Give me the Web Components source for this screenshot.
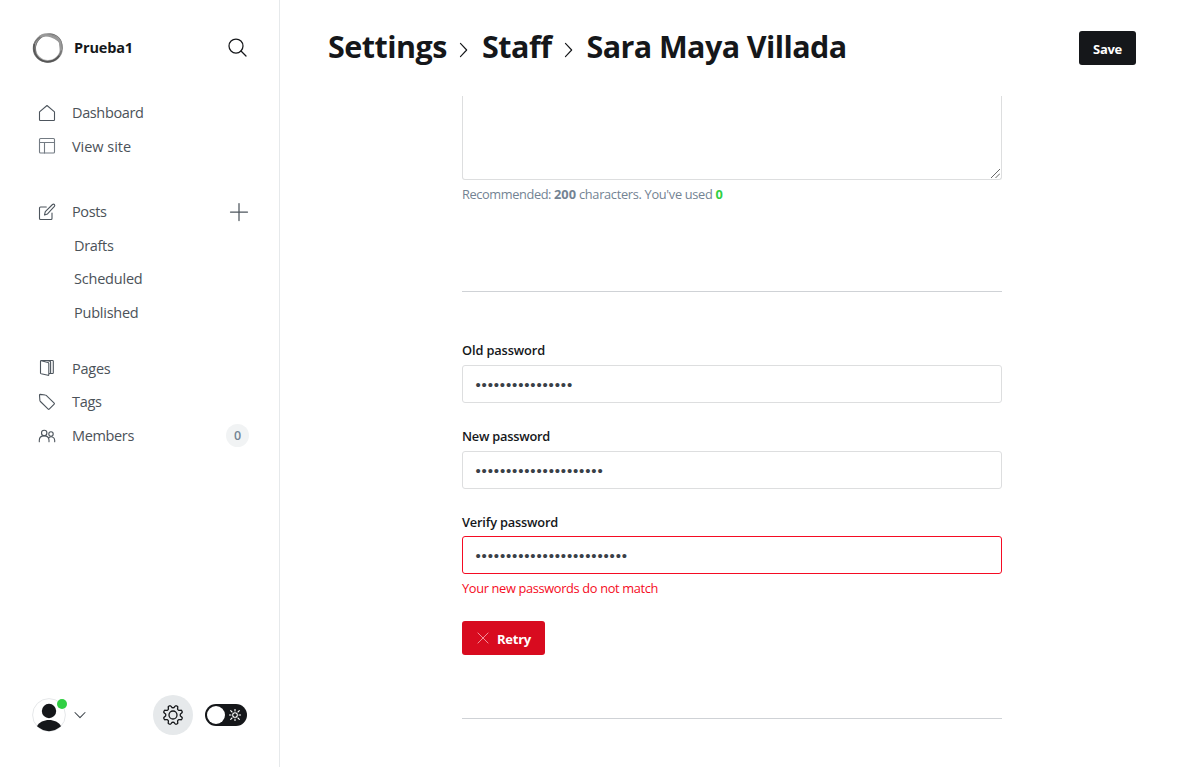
<!DOCTYPE html>
<html lang="en">
<head>
<meta charset="utf-8">
<title>Settings</title>
<style>
html,body{margin:0;height:100%;overflow:hidden;background:#fff}
body{font-family:"Open Sans","Noto Sans",sans-serif;color:#15171a}
</style>
</head>
<body>
<staff-app></staff-app>
<script>
const define=(name,html,setup)=>customElements.define(name,class extends HTMLElement{
  constructor(){
    super();
    const t=document.createElement('template');
    t.innerHTML=html;
    this.attachShadow({mode:'open'}).append(t.content.cloneNode(true));
  }
  connectedCallback(){ if(setup) setup(this,this.shadowRoot); }
});

/* Single-line label whose tracking is adjusted to a requested width. */
define('fit-text',`<style>:host{display:inline-block;white-space:pre;flex:none}span{display:inline-block}</style><span><slot></slot></span>`,(el,root)=>{
  const s=root.querySelector('span'), w=+el.getAttribute('w');
  const n=el.textContent.length;
  s.style.letterSpacing=((w-s.getBoundingClientRect().width)/n)+'px';
});

const icons={
 search:'<circle cx="8" cy="8" r="7"/><path d="m13 13 5 5"/>',
 home:'<path d="M1.500 7.900v7.900q0 .7.7.7h13.600q.7 0 .7-.7V7.900L9 1.500z"/>',
 site:'<rect x="1.5" y="1.5" width="15" height="14.5" rx="1"/><path d="M1.5 5.5h15M6.5 5.5V16"/>',
 edit:'<path d="M8.3 4H2.5q-1 0-1 1v10.500q0 1 1 1H13q1 0 1-1V10M6.500 12l.8-3.300 7.200-7.200q1-.8 1.900 0 .8.9 0 1.900L9.500 10.900z"/>',
 pages:'<path d="M3.200 1.700 10 3.500q.8.200.8 1v11.300q0 .7-.8.500L3.200 14.800q-.7-.2-.7-.8V2.200q0-.7.700-.7H14.500q.8 0 .8.700v11.500q0 .8-.8.800h-1.800M8.800 1.500l3.200.8q.6.200.6 1v11.200h-1.800"/>',
 tag:'<path d="M1.500 2.200q0-.8.800-.8L7.200 2q.6 0 1 .4l8 7.800q.5.500 0 1l-5 5q-.5.500-1 0L2.400 8.500Q2 8.100 1.900 7.500z"/>',
 members:'<circle cx="6.200" cy="6" r="2.700"/><circle cx="13" cy="7" r="2.200"/><path d="M1.300 14.800v-1.600c0-5.800 9.700-5.800 9.700 0v1.600M10.700 10.900c2-2.200 6-1.200 6 2.300v1.600"/>',
 plus:'<path d="M9 .5v17M.5 9h17"/>',
 down:'<path d="m2.500 5.800 6.500 6.700 6.500-6.700"/>',
 right:'<path d="m5 1.500 7 7.500-7 7.500"/>',
 cross:'<path d="m2.500 2.500 13 13m0-13-13 13"/>'
};
define('ui-icon',`<style>:host{display:block;width:18px;height:18px;flex:none}svg{display:block;width:100%;height:100%;overflow:visible;fill:none;stroke:currentColor;stroke-width:var(--stroke,1.1);stroke-linejoin:round;stroke-linecap:round}</style><svg viewBox="0 0 18 18"></svg>`,
 (el,root)=>{root.querySelector('svg').innerHTML=icons[el.getAttribute('name')]});

define('nav-item',`<style>
:host{display:flex;align-items:center;height:33.5px;padding:0 31px 0 38px;font-size:14.500px;font-weight:400;color:#4b5259}
::slotted(ui-icon){color:#4d555d}
::slotted([slot=icon]){margin-right:16px}
.end{margin-left:auto}
:host([sub]){padding-left:74px}
</style><slot name="icon"></slot><slot></slot><div class="end"><slot name="end"></slot></div>`);

define('count-badge',`<style>:host{display:flex;box-sizing:border-box;width:23px;height:23px;padding-top:1px;margin:1px -1px 0 0;border-radius:50%;background:#f1f3f4;align-items:center;justify-content:center;font-size:12.500px;font-weight:600;color:#738393}</style><slot></slot>`);

define('site-logo',`<style>:host{display:block;width:32px;height:32px;flex:none}svg{display:block}</style>
<svg width="32" height="32" viewBox="0 0 32 32" fill="none">
<circle cx="16" cy="16" r="13.500" stroke="#aaa" stroke-width="3"/>
<ellipse cx="15.500" cy="16.400" rx="14" ry="13.400" stroke="#666" stroke-width="1.500" opacity=".8"/>
<ellipse cx="16.500" cy="15.500" rx="12.800" ry="14.300" stroke="#777" stroke-width="1" transform="rotate(35 16 16)"/>
<path d="M2.300 12c-2 10 5 17.500 13 17.700 5 0 9-2 12-6" stroke="#555" stroke-width="1.500"/>
<path d="M8 4.500c7-3 15 0 20 5l1 9" stroke="#999" stroke-width="2.400"/></svg>`);

define('user-avatar',`<style>:host{display:block;position:relative;width:34px;height:34px;flex:none}svg{display:block}i{position:absolute;right:-1px;top:1px;width:10px;height:10px;border-radius:50%;background:#30cf43}</style>
<svg width="34" height="34" viewBox="0 0 34 34"><circle cx="17" cy="17" r="16.400" fill="#fff" stroke="#e5e7e9"/><circle cx="17" cy="13" r="7.200" fill="#15171a"/><path d="M5 28.300C9 20 25 20 29 28.300Q17 38 5 28.300Z" fill="#15171a"/></svg><i></i>`);

define('gear-button',`<style>:host{display:flex;align-items:center;justify-content:center;width:40px;height:40px;border-radius:50%;background:#e6e9eb;flex:none}</style>
<svg width="22" height="22" viewBox="-11 -11 22 22" fill="none" stroke="#15171a" stroke-width="1.300" stroke-linejoin="round"><circle r="4"/><path/></svg>`,(el,root)=>{
  const p=[];
  for(let i=0;i<=96;i++){
    const a=i/96*Math.PI*2, c=Math.cos(8*a+Math.PI);
    const r=8.500+1.250*Math.tanh(2*c)/Math.tanh(2);
    p.push((r*Math.cos(a)).toFixed(2)+' '+(r*Math.sin(a)).toFixed(2));
  }
  root.querySelector('path').setAttribute('d','M'+p.join('L')+'Z');
});

define('theme-toggle',`<style>:host{display:flex;align-items:center;justify-content:space-between;box-sizing:border-box;width:42px;height:22px;border-radius:11px;background:#15171a;padding:0 6px 0 2px;flex:none}b{width:18px;height:18px;border-radius:50%;background:#fff}</style>
<b></b><svg width="12" height="12" viewBox="-6 -6 12 12" stroke="#fff" stroke-width="1.100" fill="none"><circle r="2.300"/><path d="M0-6v2M0 4v2M-6 0h2M4 0h2M-4.300-4.300l1.300 1.300M3 3l1.300 1.300M-4.300 4.300l1.300-1.300M3-3l1.300-1.300" stroke-linecap="round"/></svg>`);

define('side-bar',`<style>
:host{display:flex;flex-direction:column;box-sizing:border-box;width:280px;height:100%;border-right:1px solid #e6e9eb;flex:none}
header{display:flex;align-items:center;height:96px;padding:0 33px 0 32px;box-sizing:border-box}
header fit-text{font-size:14.500px;font-weight:700;margin:-2px 0 0 10px}
header ui-icon{margin:-2px .5px 0 auto}
nav.b{margin-top:31.500px}nav.c{margin-top:22.500px}
.lo{margin-top:1px}
footer{margin-top:auto;display:flex;align-items:center;height:40px;padding:0 32px 32px}
footer .dn{width:14px;height:14px;margin-left:7px;color:#394047}
gear-button{margin-left:auto}theme-toggle{margin-left:12px}
</style>
<header><site-logo></site-logo><fit-text w="59">Prueba1</fit-text><ui-icon name="search" style="--stroke:1.250"></ui-icon></header>
<nav>
<nav-item><ui-icon slot="icon" name="home"></ui-icon><fit-text w="71.500" style="margin-top:-1px">Dashboard</fit-text></nav-item>
<nav-item><ui-icon slot="icon" name="site" style="color:#737b83"></ui-icon><fit-text w="59">View site</fit-text></nav-item>
</nav>
<nav class="b">
<nav-item><ui-icon slot="icon" name="edit" style="margin-top:1px"></ui-icon><fit-text w="34.500">Posts</fit-text><ui-icon slot="end" name="plus" style="--stroke:1.250;margin-top:1px"></ui-icon></nav-item>
<nav-item sub><fit-text class="lo" w="39.500">Drafts</fit-text></nav-item>
<nav-item sub><fit-text w="68.500">Scheduled</fit-text></nav-item>
<nav-item sub><fit-text class="lo" w="64.500">Published</fit-text></nav-item>
</nav>
<nav class="c">
<nav-item><ui-icon slot="icon" name="pages"></ui-icon><fit-text class="lo" w="38.500">Pages</fit-text></nav-item>
<nav-item><ui-icon slot="icon" name="tag" style="margin-top:1px"></ui-icon><fit-text w="29.500">Tags</fit-text></nav-item>
<nav-item><ui-icon slot="icon" name="members" style="margin-top:2px"></ui-icon><fit-text class="lo" w="62">Members</fit-text><count-badge slot="end">0</count-badge></nav-item>
</nav>
<footer><user-avatar></user-avatar><ui-icon class="dn" name="down" style="--stroke:1.300"></ui-icon><gear-button></gear-button><theme-toggle></theme-toggle></footer>`);

define('ui-button',`<style>:host{display:flex;box-sizing:border-box;height:34px;padding:2px 14px 0;align-items:center;border-radius:3px;background:var(--bg,#15171a);color:#fff;font-size:13px;font-weight:700;flex:none}::slotted(ui-icon){margin-right:7px;margin-top:-2px}</style><slot></slot>`);

define('page-header',`<style>
:host{display:flex;align-items:center;box-sizing:border-box;height:96px;padding:0 48px;flex:none}
h1{margin:-5px 0 0;display:flex;align-items:center;font-size:30.500px;line-height:40px;font-weight:700;flex:1}
ui-icon{width:16px;height:16px;margin:8px 10px 0 9px}
</style>
<h1><fit-text w="119">Settings</fit-text><ui-icon name="right" style="--stroke:1.300"></ui-icon><fit-text w="69.500">Staff</fit-text><ui-icon name="right" style="--stroke:1.300"></ui-icon><fit-text w="260">Sara Maya Villada</fit-text></h1>
<ui-button><fit-text w="29">Save</fit-text></ui-button>`);

define('password-field',`<style>
:host{display:block;height:86px}
:host([error]){height:85px;margin-top:-.6px}
label{display:block;font-size:12.800px;font-weight:600;line-height:18px;height:24px}
:host([error]) label{padding-top:1px;height:23px}
.box{box-sizing:border-box;height:38px;border:1px solid #dddedf;border-radius:3px;padding:0 12.500px;display:flex;align-items:center;color:#394047;font:15px "Liberation Sans",sans-serif}
:host([error]) .box{border-color:#f50b23}
p{margin:4px 0 0;font-size:12.800px;line-height:20px;color:#f50b23}
</style><label><slot name="label"></slot></label><div class="box"><slot></slot></div><p><slot name="error"></slot></p>`);

define('bio-field',`<style>
:host{display:block}
.area{box-sizing:border-box;height:84px;border:1px solid #dddedf;border-top:0;border-radius:0 0 3px 3px;display:flex;align-items:flex-end;justify-content:flex-end}
p{margin:4px 0 0;display:flex;font-size:12.800px;line-height:20px;color:#738393}
b{font-weight:700}.n{color:#30cf43}
svg{display:block;margin:0 1px 1px 0}
</style><div class="area"><svg width="9" height="9" viewBox="0 0 9 9" stroke="#555" stroke-width=".9"><path d="M0 9 9 0M4.500 9 9 4.500"/></svg></div>
<p><fit-text w="92">Recommended: </fit-text><b><fit-text w="22">200</fit-text></b><fit-text w="139.500"> characters. You've used </fit-text><b class="n"><fit-text w="8">0</fit-text></b></p>`);

define('staff-form',`<style>
:host{display:block;width:540px;margin-left:182px}
hr{border:0;height:1px;margin:0;background:#cfd2d6}
.first{margin-top:87px}
.fields{margin-top:49px}
ui-button{width:83px;margin-top:23.600px}
.last{margin-top:63px}
</style>
<bio-field></bio-field><hr class="first">
<div class="fields">
<password-field><fit-text slot="label" w="83">Old password</fit-text><fit-text w="97.500">••••••••••••••••</fit-text></password-field>
<password-field><fit-text slot="label" w="88">New password</fit-text><fit-text w="128">•••••••••••••••••••••</fit-text></password-field>
<password-field error><fit-text slot="label" w="96">Verify password</fit-text><fit-text w="152.400">•••••••••••••••••••••••••</fit-text><fit-text slot="error" w="196">Your new passwords do not match</fit-text></password-field>
</div>
<ui-button style="--bg:#d80b1f"><ui-icon name="cross" style="width:14px;height:14px;--stroke:1.200;color:#f29aa3"></ui-icon><fit-text w="34">Retry</fit-text></ui-button>
<hr class="last">`);

define('staff-app',`<style>:host{display:flex;width:100%;height:100vh;overflow:hidden}main{flex:1;min-width:0}</style><side-bar></side-bar><main><page-header></page-header><staff-form></staff-form></main>`);
</script>
</body>
</html>
